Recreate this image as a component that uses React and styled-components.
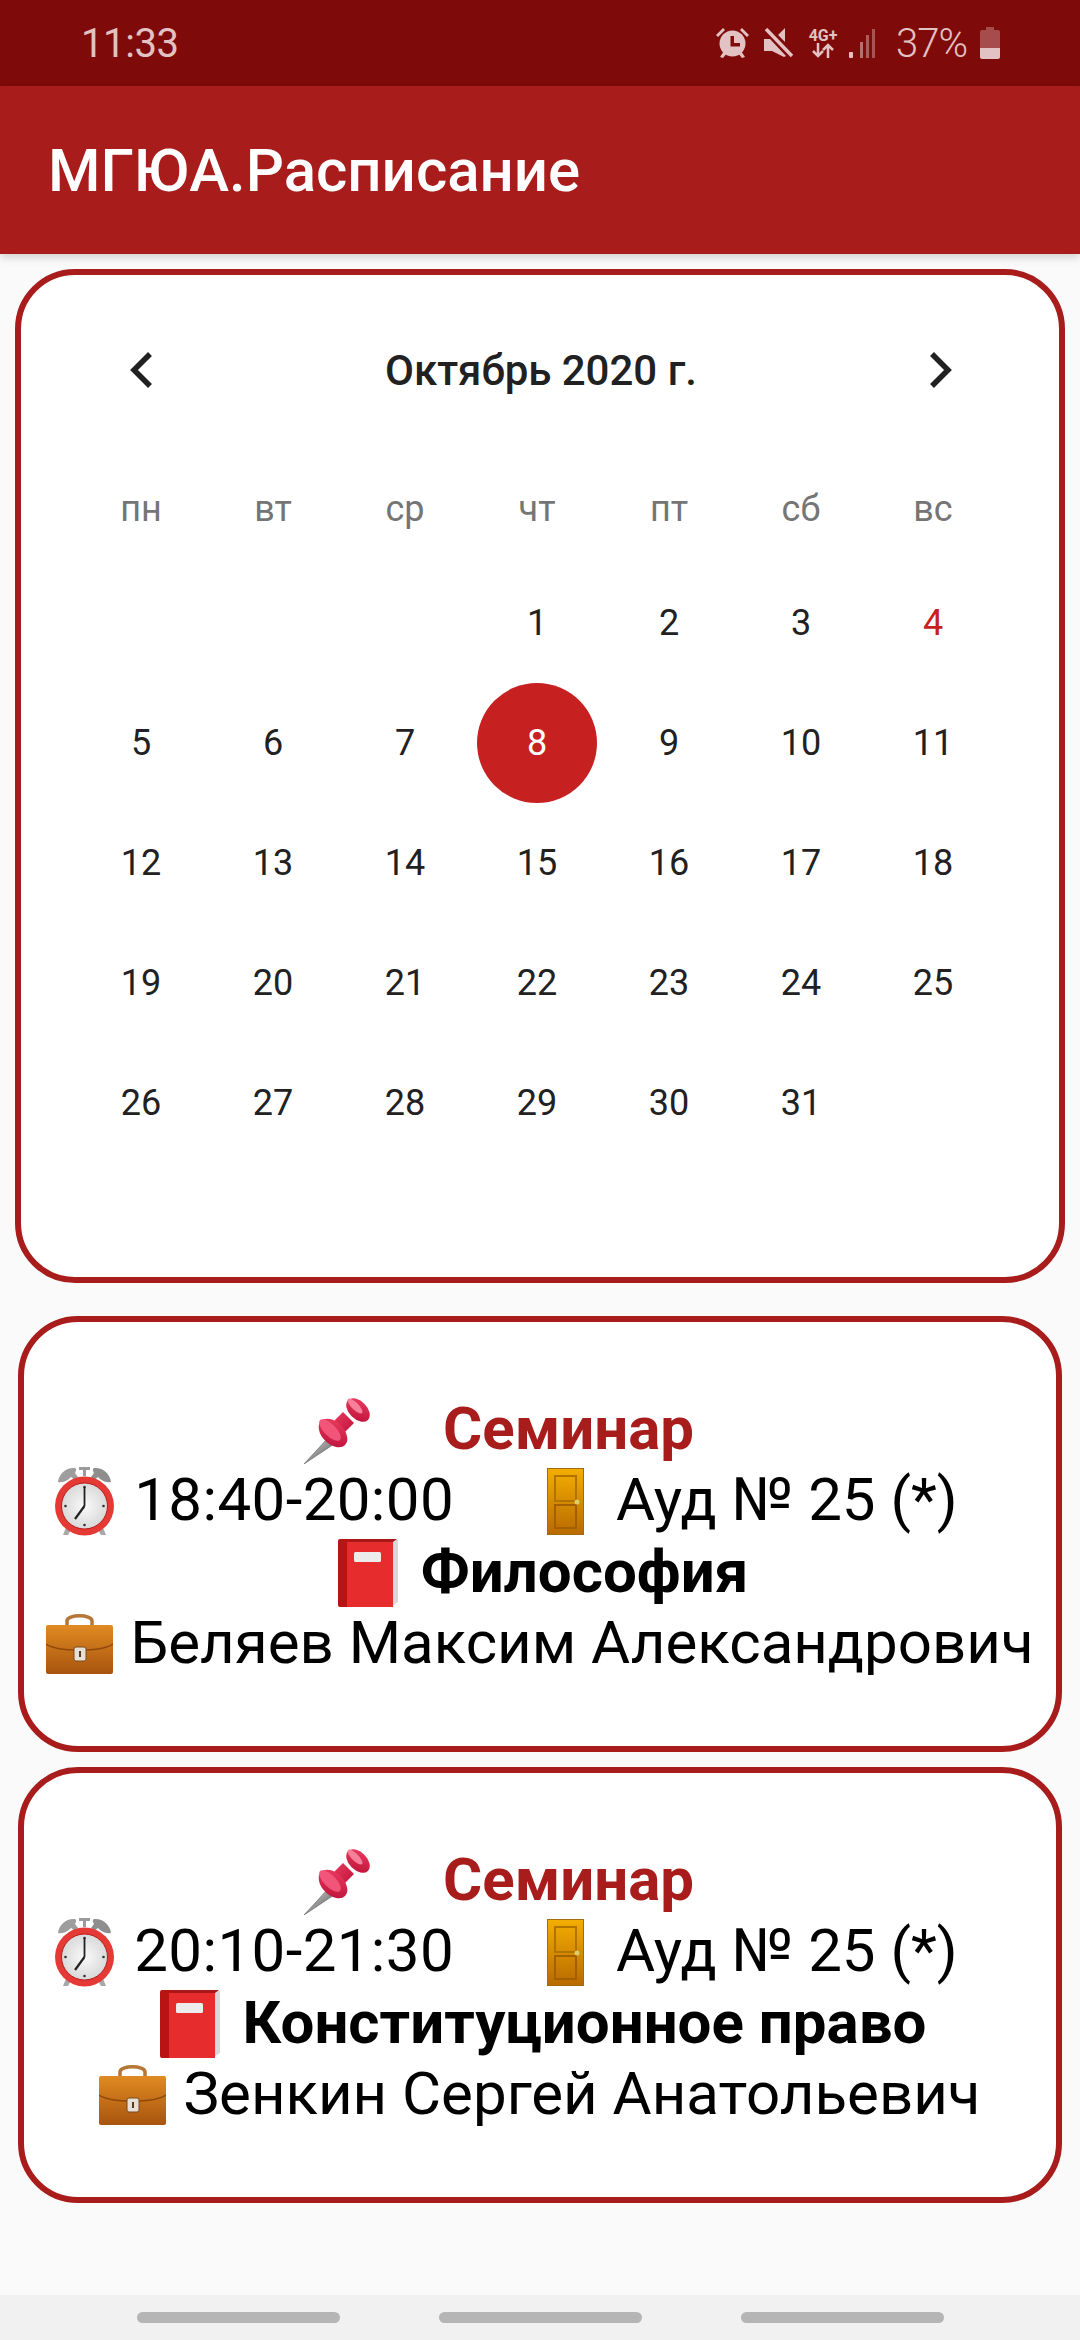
import React from 'react';
import styled, { createGlobalStyle } from 'styled-components';

const GlobalStyle = createGlobalStyle`
  html, body {
    margin: 0;
    padding: 0;
    background: #fafafa;
    font-family: Roboto, "Liberation Sans", sans-serif;
  }
`;

const Screen = styled.div`
  width: 1080px;
  height: 2340px;
  display: flex;
  flex-direction: column;
  overflow: hidden;
  background: #fafafa;
`;

const StatusBar = styled.div`
  height: 86px;
  flex: none;
  display: flex;
  align-items: center;
  padding: 0 80px 0 81px;
  background: #7f0a0a;
  color: #e2c2c2;
  font-size: 40px;
`;

const StatusTime = styled.span`
  margin-right: auto;
  letter-spacing: -0.4px;
`;

const StatusSlot = styled.span`
  display: flex;
  flex: none;
  margin-right: ${p => p.$gap || 0}px;
`;

const NetworkType = styled.div`
  width: 30px;
  margin-right: 11px;
  display: flex;
  flex-direction: column;
  align-items: center;
  font-size: 16px;
  line-height: 15px;
  font-weight: 700;
`;

const Percent = styled.span`
  margin-right: 13px;
  font-weight: 300;
  letter-spacing: -1px;
`;

const AppBar = styled.header`
  position: relative;
  z-index: 1;
  height: 168px;
  flex: none;
  display: flex;
  align-items: center;
  padding-left: 48px;
  background: #a81c1c;
  box-shadow: 0 3px 9px rgba(0, 0, 0, 0.18);
  color: #fff;
  font-size: 60px;
  font-weight: 500;
`;

const Content = styled.main`
  flex: 1;
  display: flex;
  flex-direction: column;
  padding-top: 15px;
`;

const CalendarCard = styled.section`
  box-sizing: border-box;
  height: 1014px;
  margin: 0 15px 33px;
  padding: 35px 54px 0;
  border: 6px solid #a81c1c;
  border-radius: 60px;
  background: #fff;
`;

const MonthRow = styled.div`
  height: 120px;
  display: flex;
  align-items: center;
  justify-content: space-between;
  padding: 0 52px 0 54px;
  color: #212121;
  font-size: 42px;
  font-weight: 500;
`;

const WeekRow = styled.div`
  display: grid;
  grid-template-columns: repeat(7, 132px);
  height: 72px;
  margin: 43px 0 18px;
  align-items: center;
  justify-items: center;
  color: #757575;
  font-size: 36px;
`;

const DaysGrid = styled.div`
  display: grid;
  grid-template-columns: repeat(7, 132px);
  grid-auto-rows: 120px;
  align-items: center;
  justify-items: center;
`;

const Day = styled.div`
  width: 120px;
  height: 120px;
  display: flex;
  align-items: center;
  justify-content: center;
  border-radius: 50%;
  font-size: 36px;
  background: ${p => (p.$selected ? '#c72020' : 'transparent')};
  color: ${p => (p.$selected ? '#fff' : p.$red ? '#c72020' : '#212121')};
`;

const LessonCard = styled.article`
  box-sizing: border-box;
  height: 436px;
  margin: 0 18px 15px;
  padding-top: 3px;
  display: flex;
  flex-direction: column;
  justify-content: center;
  border: 6px solid #a81c1c;
  border-radius: 60px;
  background: #fff;
  color: #000;
  font-size: 60px;
`;

const Line = styled.div`
  height: 71.5px;
  line-height: 71.5px;
  display: flex;
  align-items: center;
  justify-content: center;
  padding-left: ${p => p.$lead || 0}px;
  padding-right: ${p => p.$trail || 0}px;
  white-space: nowrap;
  font-weight: ${p => (p.$bold ? 700 : 400)};
  color: ${p => p.$color || '#000'};
`;

const TimeText = styled.span`
  letter-spacing: 0.4px;
`;

const EmojiSlot = styled.span`
  display: flex;
  flex: none;
  margin-left: ${p => p.$before || 0}px;
  margin-right: ${p => p.$after || 0}px;
  margin-top: ${p => p.$drop || 0}px;
`;

const NavBar = styled.footer`
  height: 45px;
  flex: none;
  display: flex;
  align-items: center;
  justify-content: center;
  gap: 99px;
  background: #f1f1f1;
`;

const NavPill = styled.span`
  width: 203px;
  height: 11px;
  border-radius: 6px;
  background: #b5b5b5;
`;

const AlarmIcon = () => (
  <svg width="33" height="30" viewBox="0 0 33 30" fill="#e2c2c2">
    <path d="M0 7 7 0l2 2-7 7zM33 7 26 0l-2 2 7 7z" />
    <circle cx="16.500" cy="15.500" r="13" />
    <path d="M4 29l4-6 3 2-4 5zM29 29l-4-6-3 2 4 5z" />
    <path d="M14.500 8h3.500v7h6v3.500h-9.500z" fill="#7f0a0a" />
  </svg>
);

const MuteIcon = () => (
  <svg width="29" height="30" viewBox="0 0 29 30" fill="#e2c2c2">
    <path d="M0 11h6l16 17-2 1-12-6H0zM21 0v14l-7-7z" />
    <path d="M2 1 28 28" stroke="#e2c2c2" strokeWidth="3.500" />
    <path d="M6 0 29 24" stroke="#7f0a0a" strokeWidth="1.500" />
  </svg>
);

const NetArrows = () => (
  <svg width="22" height="15" viewBox="0 0 22 15" fill="none" stroke="#e2c2c2" strokeWidth="2.500">
    <path d="M6 0v13M1 8l5 5 5-5" />
    <path d="M16 15V2M11 7l5-5 5 5" />
  </svg>
);

const SignalIcon = () => (
  <svg width="26" height="30" viewBox="0 0 26 30" fill="#e2c2c2">
    <rect x="0" y="24" width="4" height="6" rx="1" />
    <rect x="11" y="14" width="3" height="16" opacity="0.55" />
    <rect x="23" y="1" width="3" height="29" opacity="0.4" />
    <rect x="17" y="7" width="3" height="23" opacity="0.45" />
  </svg>
);

const BatteryIcon = () => (
  <svg width="20" height="32" viewBox="0 0 20 32">
    <path d="M6 0h8v3h4a2 2 0 0 1 2 2v16H0V5a2 2 0 0 1 2-2h4z" fill="#a64c4c" />
    <path d="M0 21h20v9a2 2 0 0 1-2 2H2a2 2 0 0 1-2-2z" fill="#e2c2c2" />
  </svg>
);

const Chevron = ({ flip }) => (
  <svg width="24" height="36" viewBox="0 0 24 36" fill="none" stroke="#212121" strokeWidth="5.500">
    <path d={flip ? 'M3 2l16 16L3 34' : 'M21 2 5 18l16 16'} />
  </svg>
);

const PinEmoji = () => (
  <svg width="67" height="68" viewBox="0 0 67 68">
    <defs>
      <linearGradient id="pinBody" x1="0" y1="0" x2="1" y2="1">
        <stop offset="0" stopColor="#ee3f62" />
        <stop offset="1" stopColor="#bb0f38" />
      </linearGradient>
      <linearGradient id="pinNeedle" x1="0" y1="0" x2="1" y2="1">
        <stop offset="0" stopColor="#d8d8d8" />
        <stop offset="1" stopColor="#555" />
      </linearGradient>
    </defs>
    <path d="M0 68 24 42l6 6z" fill="url(#pinNeedle)" stroke="#666" strokeWidth="0.700" />
    <path d="M39 16 50 27 36 41 25 30z" fill="url(#pinBody)" />
    <ellipse cx="29" cy="37" rx="17" ry="11" transform="rotate(45 29 37)" fill="url(#pinBody)" />
    <ellipse cx="26" cy="34" rx="14" ry="6" transform="rotate(45 26 34)" fill="#f2557a" />
    <ellipse cx="54" cy="14" rx="14" ry="9" transform="rotate(45 54 14)" fill="url(#pinBody)" />
    <ellipse cx="51" cy="10" rx="10" ry="3.500" transform="rotate(45 51 10)" fill="#f6809a" />
  </svg>
);

const ClockEmoji = () => (
  <svg width="59" height="70" viewBox="0 0 59 70">
    <defs>
      <radialGradient id="clockFace">
        <stop offset="0" stopColor="#fafafa" />
        <stop offset="1" stopColor="#d9d9d9" />
      </radialGradient>
    </defs>
    <path d="M12 58 8 68h5l4-7zM47 58l4 10h-5l-4-7z" fill="#a8a8a8" />
    <path d="M3 15C4 6 12 0 20 1c2 1 1 3 0 5l3 4-3 3-4-3c-3 3-7 6-13 5z" fill="#9e9e9e" />
    <path d="M56 15C55 6 47 0 39 1c-2 1-1 3 0 5l-3 4 3 3 4-3c3 3 7 6 13 5z" fill="#8e8e8e" />
    <path d="M24 0h11v3h-4v6h-3V3h-4z" fill="#9a9a9a" />
    <circle cx="29.500" cy="39" r="29.500" fill="#e53935" />
    <circle cx="29.500" cy="39" r="23" fill="url(#clockFace)" stroke="#b71c1c" strokeWidth="1" />
    <g fill="#333">
      <circle cx="29.500" cy="20" r="1.300" />
      <circle cx="29.500" cy="58" r="1.300" />
      <circle cx="10.500" cy="39" r="1.300" />
      <circle cx="48.500" cy="39" r="1.300" />
    </g>
    <path d="M29.500 39V20" stroke="#222" strokeWidth="1.800" />
    <path d="M29.500 39 20 52" stroke="#222" strokeWidth="2.200" />
  </svg>
);

const DoorEmoji = () => (
  <svg width="37" height="67" viewBox="0 0 37 67">
    <defs>
      <linearGradient id="doorWood" x1="0" y1="0" x2="0" y2="1">
        <stop offset="0" stopColor="#f4ae00" />
        <stop offset="1" stopColor="#b86a00" />
      </linearGradient>
    </defs>
    <rect x="0.500" y="0.500" width="36" height="66" fill="url(#doorWood)" stroke="#a36a10" />
    <rect x="8" y="8" width="21" height="25" fill="none" stroke="#b27400" strokeWidth="2" />
    <rect x="8" y="37" width="21" height="23" fill="none" stroke="#a45f00" strokeWidth="2" />
    <circle cx="30" cy="34" r="2.500" fill="#d9d060" />
  </svg>
);

const BookEmoji = () => (
  <svg width="60" height="68" viewBox="0 0 60 68">
    <path d="M54 1h6v62l-6 4z" fill="#d8d8d8" />
    <path d="M4 0h55l-4 3H10z" fill="#a81818" />
    <path d="M2 0h10v68H2a2 2 0 0 1-2-2V2a2 2 0 0 1 2-2z" fill="#b81414" />
    <rect x="9" y="3" width="46" height="65" fill="#e62c2c" />
    <rect x="16" y="13" width="27" height="10" rx="1.500" fill="#ececec" />
  </svg>
);

const CaseEmoji = () => (
  <svg width="67" height="60" viewBox="0 0 67 60">
    <defs>
      <linearGradient id="caseLeather" x1="0" y1="0" x2="0" y2="1">
        <stop offset="0" stopColor="#e08a22" />
        <stop offset="1" stopColor="#a8540e" />
      </linearGradient>
    </defs>
    <path d="M21 13V7c0-7 25-7 25 0v6" fill="none" stroke="#b57636" strokeWidth="3.500" />
    <rect x="0" y="11" width="67" height="49" rx="2" fill="url(#caseLeather)" />
    <path d="M0 30c12 8 55 8 67 0" fill="none" stroke="#8f480c" strokeWidth="1.500" />
    <rect x="28" y="33" width="12" height="14" rx="2" fill="#e6e0d8" stroke="#7d4a18" />
    <rect x="33" y="37" width="2" height="6" fill="#5a3a18" />
  </svg>
);

const weekDays = ['пн', 'вт', 'ср', 'чт', 'пт', 'сб', 'вс'];
const days = Array.from({ length: 31 }, (_, i) => i + 1);

const lessons = [
  {
    time: '18:40-20:00',
    subject: 'Философия',
    teacher: 'Беляев Максим Александрович',
  },
  {
    time: '20:10-21:30',
    subject: 'Конституционное право',
    teacher: 'Зенкин Сергей Анатольевич',
  },
];

const Lesson = ({ time, subject, teacher }) => (
  <LessonCard>
    <Line $bold $color="#a81c1c" $trail={82}>
      <EmojiSlot $after={72} $drop={4}><PinEmoji /></EmojiSlot>
      Семинар
    </Line>
    <Line $trail={67}>
      <EmojiSlot $after={20} $drop={4}><ClockEmoji /></EmojiSlot>
      <TimeText>{time}</TimeText>
      <EmojiSlot $before={93} $after={32} $drop={4}><DoorEmoji /></EmojiSlot>
      Ауд № 25 (*)
    </Line>
    <Line $bold $lead={6}>
      <EmojiSlot $after={23} $drop={3}><BookEmoji /></EmojiSlot>
      {subject}
    </Line>
    <Line>
      <EmojiSlot $after={17} $drop={2}><CaseEmoji /></EmojiSlot>
      {teacher}
    </Line>
  </LessonCard>
);

const App = () => (
  <Screen>
    <GlobalStyle />
    <StatusBar>
      <StatusTime>11:33</StatusTime>
      <StatusSlot $gap={15}><AlarmIcon /></StatusSlot>
      <StatusSlot $gap={15}><MuteIcon /></StatusSlot>
      <NetworkType>
        4G+
        <NetArrows />
      </NetworkType>
      <StatusSlot $gap={21}><SignalIcon /></StatusSlot>
      <Percent>37%</Percent>
      <StatusSlot><BatteryIcon /></StatusSlot>
    </StatusBar>
    <AppBar>МГЮА.Расписание</AppBar>
    <Content>
      <CalendarCard>
        <MonthRow>
          <Chevron />
          Октябрь 2020 г.
          <Chevron flip />
        </MonthRow>
        <WeekRow>
          {weekDays.map(d => <span key={d}>{d}</span>)}
        </WeekRow>
        <DaysGrid>
          <span />
          <span />
          <span />
          {days.map(d => (
            <Day key={d} $selected={d === 8} $red={d === 4}>{d}</Day>
          ))}
        </DaysGrid>
      </CalendarCard>
      {lessons.map(l => <Lesson key={l.time} {...l} />)}
    </Content>
    <NavBar>
      <NavPill />
      <NavPill />
      <NavPill />
    </NavBar>
  </Screen>
);

export default App;
